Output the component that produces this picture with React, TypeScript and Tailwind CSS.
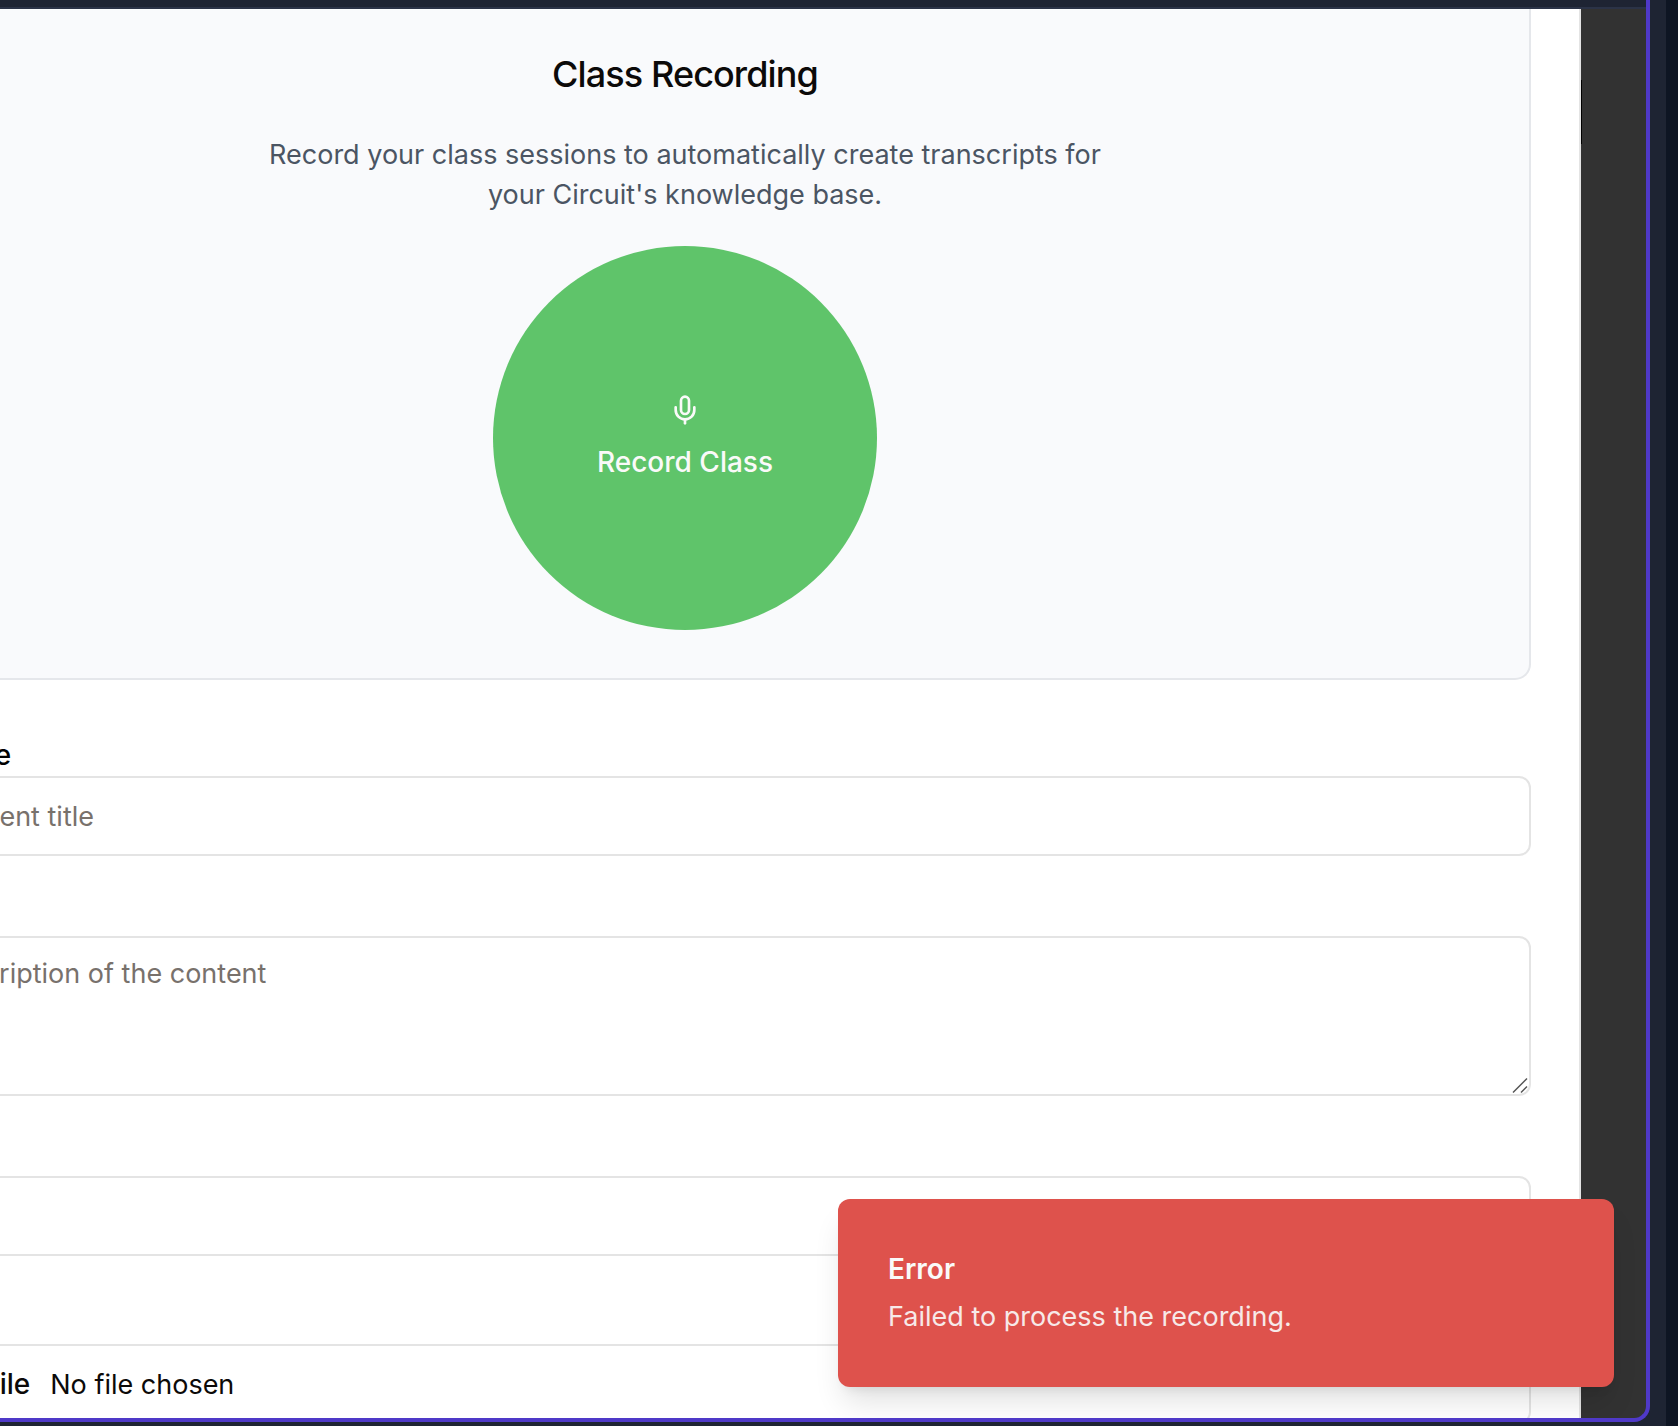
import { Mic } from "lucide-react";

const fieldClass =
  "block w-full rounded-xl border-2 border-[#e4e4e4] bg-white px-7 text-[27px] leading-10 text-[#0c0a09] placeholder:text-[#78716c] outline-none";

function RecordingCard() {
  return (
    <section className="flex flex-col items-center rounded-b-2xl border-2 border-t-0 border-[#e5e7eb] bg-[#f9fafc] pt-9 pb-12 text-center">
      <h2 className="text-[36px] leading-[58px] font-medium tracking-tight text-[#0c0a09]">
        Class Recording
      </h2>
      <p className="mt-8 max-w-[896px] text-[27px] leading-10 text-[#4b5563]">
        Record your class sessions to automatically create transcripts for your Circuit's knowledge
        base.
      </p>
      <button
        type="button"
        className="mt-[31px] flex size-96 flex-col items-center justify-center gap-4 rounded-full bg-[#5fc46a] text-[28px] leading-10 font-medium text-[#fafaf9]"
      >
        <Mic size={32} strokeWidth={2} aria-hidden="true" />
        Record Class
      </button>
    </section>
  );
}

function ContentForm() {
  return (
    <form className="mt-12 flex flex-col gap-20">
      <div>
        <label
          htmlFor="title"
          className="block h-12 text-[28px] leading-[54px] font-medium text-black"
        >
          Content Title
        </label>
        <input id="title" type="text" placeholder="Enter content title" className={`${fieldClass} h-20`} />
      </div>
      <div className="relative">
        <textarea
          aria-label="Description"
          placeholder="Brief description of the content"
          className={`${fieldClass} h-40 resize-none py-4`}
        />
        <svg
          className="pointer-events-none absolute right-0.5 bottom-0.5"
          width="18"
          height="18"
          viewBox="0 0 18 18"
          stroke="#555"
          strokeWidth="1.5"
          aria-hidden="true"
        >
          <path d="M2 16.500 16 2.500M10 16.500l6-6" />
        </svg>
      </div>
      <select aria-label="Type" className={`${fieldClass} h-20 appearance-none`}>
        <option value="" />
      </select>
      <div className="pt-2">
        <input
          aria-label="File"
          type="file"
          className={`${fieldClass} h-20 py-[18px] pl-8 file:mr-5 file:border-0 file:bg-transparent file:text-[28px] file:font-medium`}
        />
      </div>
    </form>
  );
}

function ErrorToast() {
  return (
    <div
      role="alert"
      className="absolute right-8 bottom-[31px] w-[776px] rounded-xl bg-[#de524c] p-[50px] shadow-[0_20px_30px_-6px_rgba(0,0,0,0.12),0_8px_12px_-8px_rgba(0,0,0,0.12)]"
    >
      <div className="text-[28px] leading-10 font-semibold text-[#fafaf9]">Error</div>
      <div className="mt-2 text-[27px] leading-10 text-[#fafaf9] opacity-90">
        Failed to process the recording.
      </div>
    </div>
  );
}

export default function App() {
  return (
    <div className="h-screen overflow-hidden bg-[#0e1523] pr-3 font-['Inter',sans-serif]">
      <div className="h-full bg-[#1e2433] pr-4 pb-1">
        <div className="relative flex h-full flex-col overflow-hidden rounded-br-2xl border-r-4 border-b-4 border-[#4f39c8] bg-[#323232]">
          <header className="h-[9px] shrink-0 border-b-2 border-[#2b3347] bg-[#1e2433]" />
          <div className="flex min-h-0 flex-1 overflow-hidden">
            <main className="-ml-[209px] min-w-0 flex-1 border-r-2 border-[#e4e4e4] bg-white px-12">
              <RecordingCard />
              <ContentForm />
            </main>
            <aside className="w-[65px] shrink-0 pt-[71px]">
              <div className="h-16 w-px bg-black" />
            </aside>
          </div>
          <ErrorToast />
        </div>
      </div>
    </div>
  );
}
